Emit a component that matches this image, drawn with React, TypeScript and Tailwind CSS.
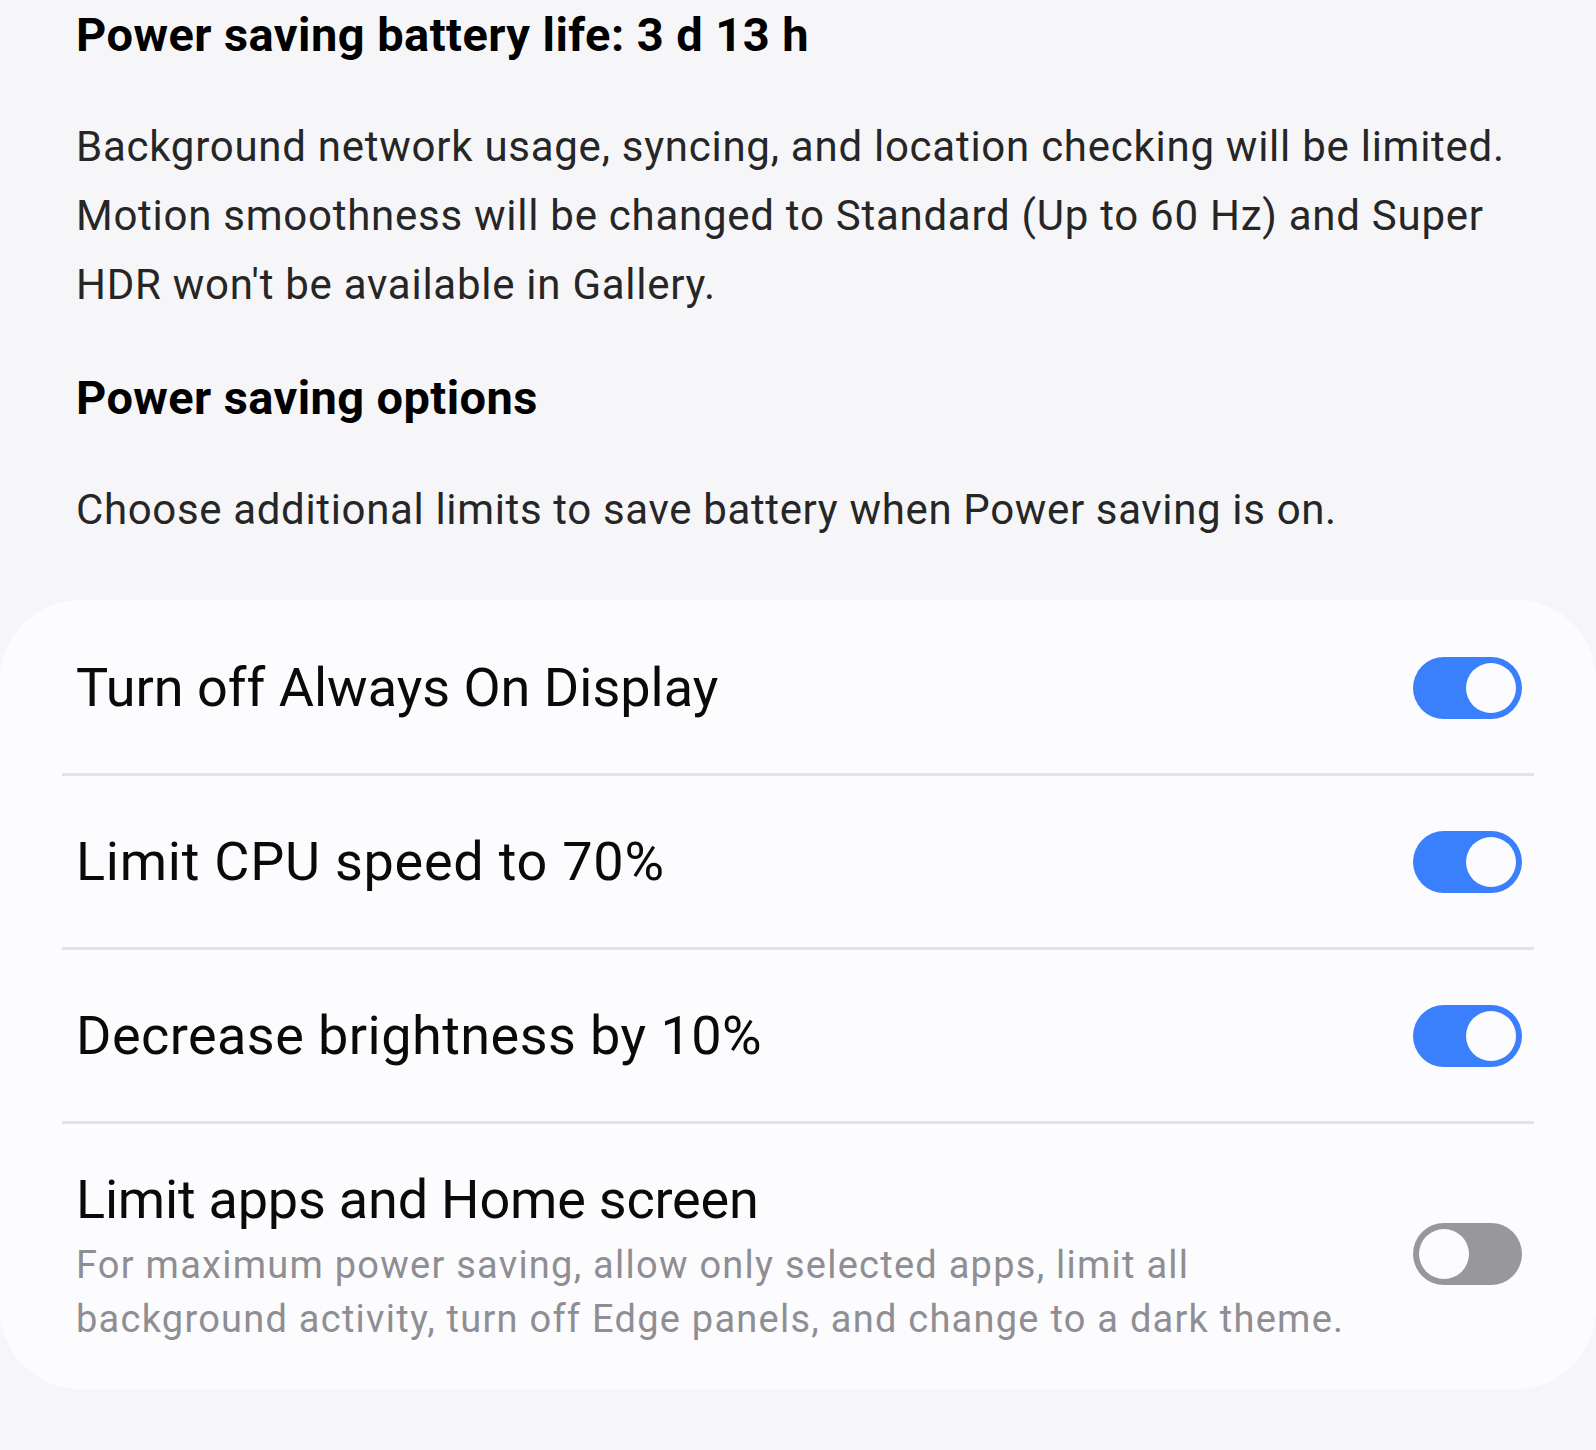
import React from "react";

function Toggle({ on }: { on: boolean }) {
  return (
    <div
      className={
        on
          ? "relative h-[62px] w-[109px] shrink-0 rounded-full bg-[#3a7ffc]"
          : "relative h-[62px] w-[109px] shrink-0 rounded-full bg-[#98979c]"
      }
    >
      <div
        className={
          on
            ? "absolute right-[6px] top-[6px] h-[50px] w-[50px] rounded-full bg-[#fcfcfe]"
            : "absolute left-[6px] top-[6px] h-[50px] w-[50px] rounded-full bg-[#fcfcfe]"
        }
      />
    </div>
  );
}

function Row({ title, track }: { title: string; track: string }) {
  return (
    <div className="flex h-[171px] items-center justify-between pl-[76px] pr-[74px]">
      <div className={"text-[54px] leading-[64px] text-[#0a0a0a] " + track}>{title}</div>
      <Toggle on={true} />
    </div>
  );
}

function Divider() {
  return <div className="mx-[62px] h-[3px] bg-[#e3e3e6]" />;
}

export default function App() {
  return (
    <div
      className="min-h-[1450px] w-[1596px] bg-[#f6f6f8] pt-[5px]"
      style={{ fontFamily: "Roboto, 'Noto Sans', sans-serif" }}
    >
      <div className="px-[76px]">
        <div className="text-[47px] font-bold leading-[60px] tracking-[0.45px] text-black">
          Power saving battery life: 3 d 13 h
        </div>
        <div className="mt-[47px] text-[42px] leading-[69px] tracking-[0.74px] text-[#262626]">
          <div>Background network usage, syncing, and location checking will be limited.</div>
          <div>Motion smoothness will be changed to Standard (Up to 60 Hz) and Super</div>
          <div>HDR won't be available in Gallery.</div>
        </div>
        <div className="mt-[49px] text-[47px] font-bold leading-[60px] tracking-[0.4px] text-black">
          Power saving options
        </div>
        <div className="mt-[47px] text-[42px] leading-[69px] tracking-[0.65px] text-[#262626]">
          Choose additional limits to save battery when Power saving is on.
        </div>
      </div>

      <div className="mt-[56px] rounded-[80px] bg-[#fcfcfe] pt-[2px]">
        <Row title="Turn off Always On Display" track="tracking-[0px]" />
        <Divider />
        <Row title="Limit CPU speed to 70%" track="tracking-[0.75px]" />
        <Divider />
        <Row title="Decrease brightness by 10%" track="tracking-[0.45px]" />
        <Divider />
        <div className="flex items-center justify-between pb-[43px] pl-[76px] pr-[74px] pt-[46px]">
          <div>
            <div className="text-[54px] leading-[60px] tracking-[-0.2px] text-[#0a0a0a]">
              Limit apps and Home screen
            </div>
            <div className="mt-[8px] text-[38px] leading-[54px] tracking-[1.25px] text-[#8e8e93]">
              <div>For maximum power saving, allow only selected apps, limit all</div>
              <div>background activity, turn off Edge panels, and change to a dark theme.</div>
            </div>
          </div>
          <div className="-mt-[8px]">
            <Toggle on={false} />
          </div>
        </div>
      </div>
    </div>
  );
}
